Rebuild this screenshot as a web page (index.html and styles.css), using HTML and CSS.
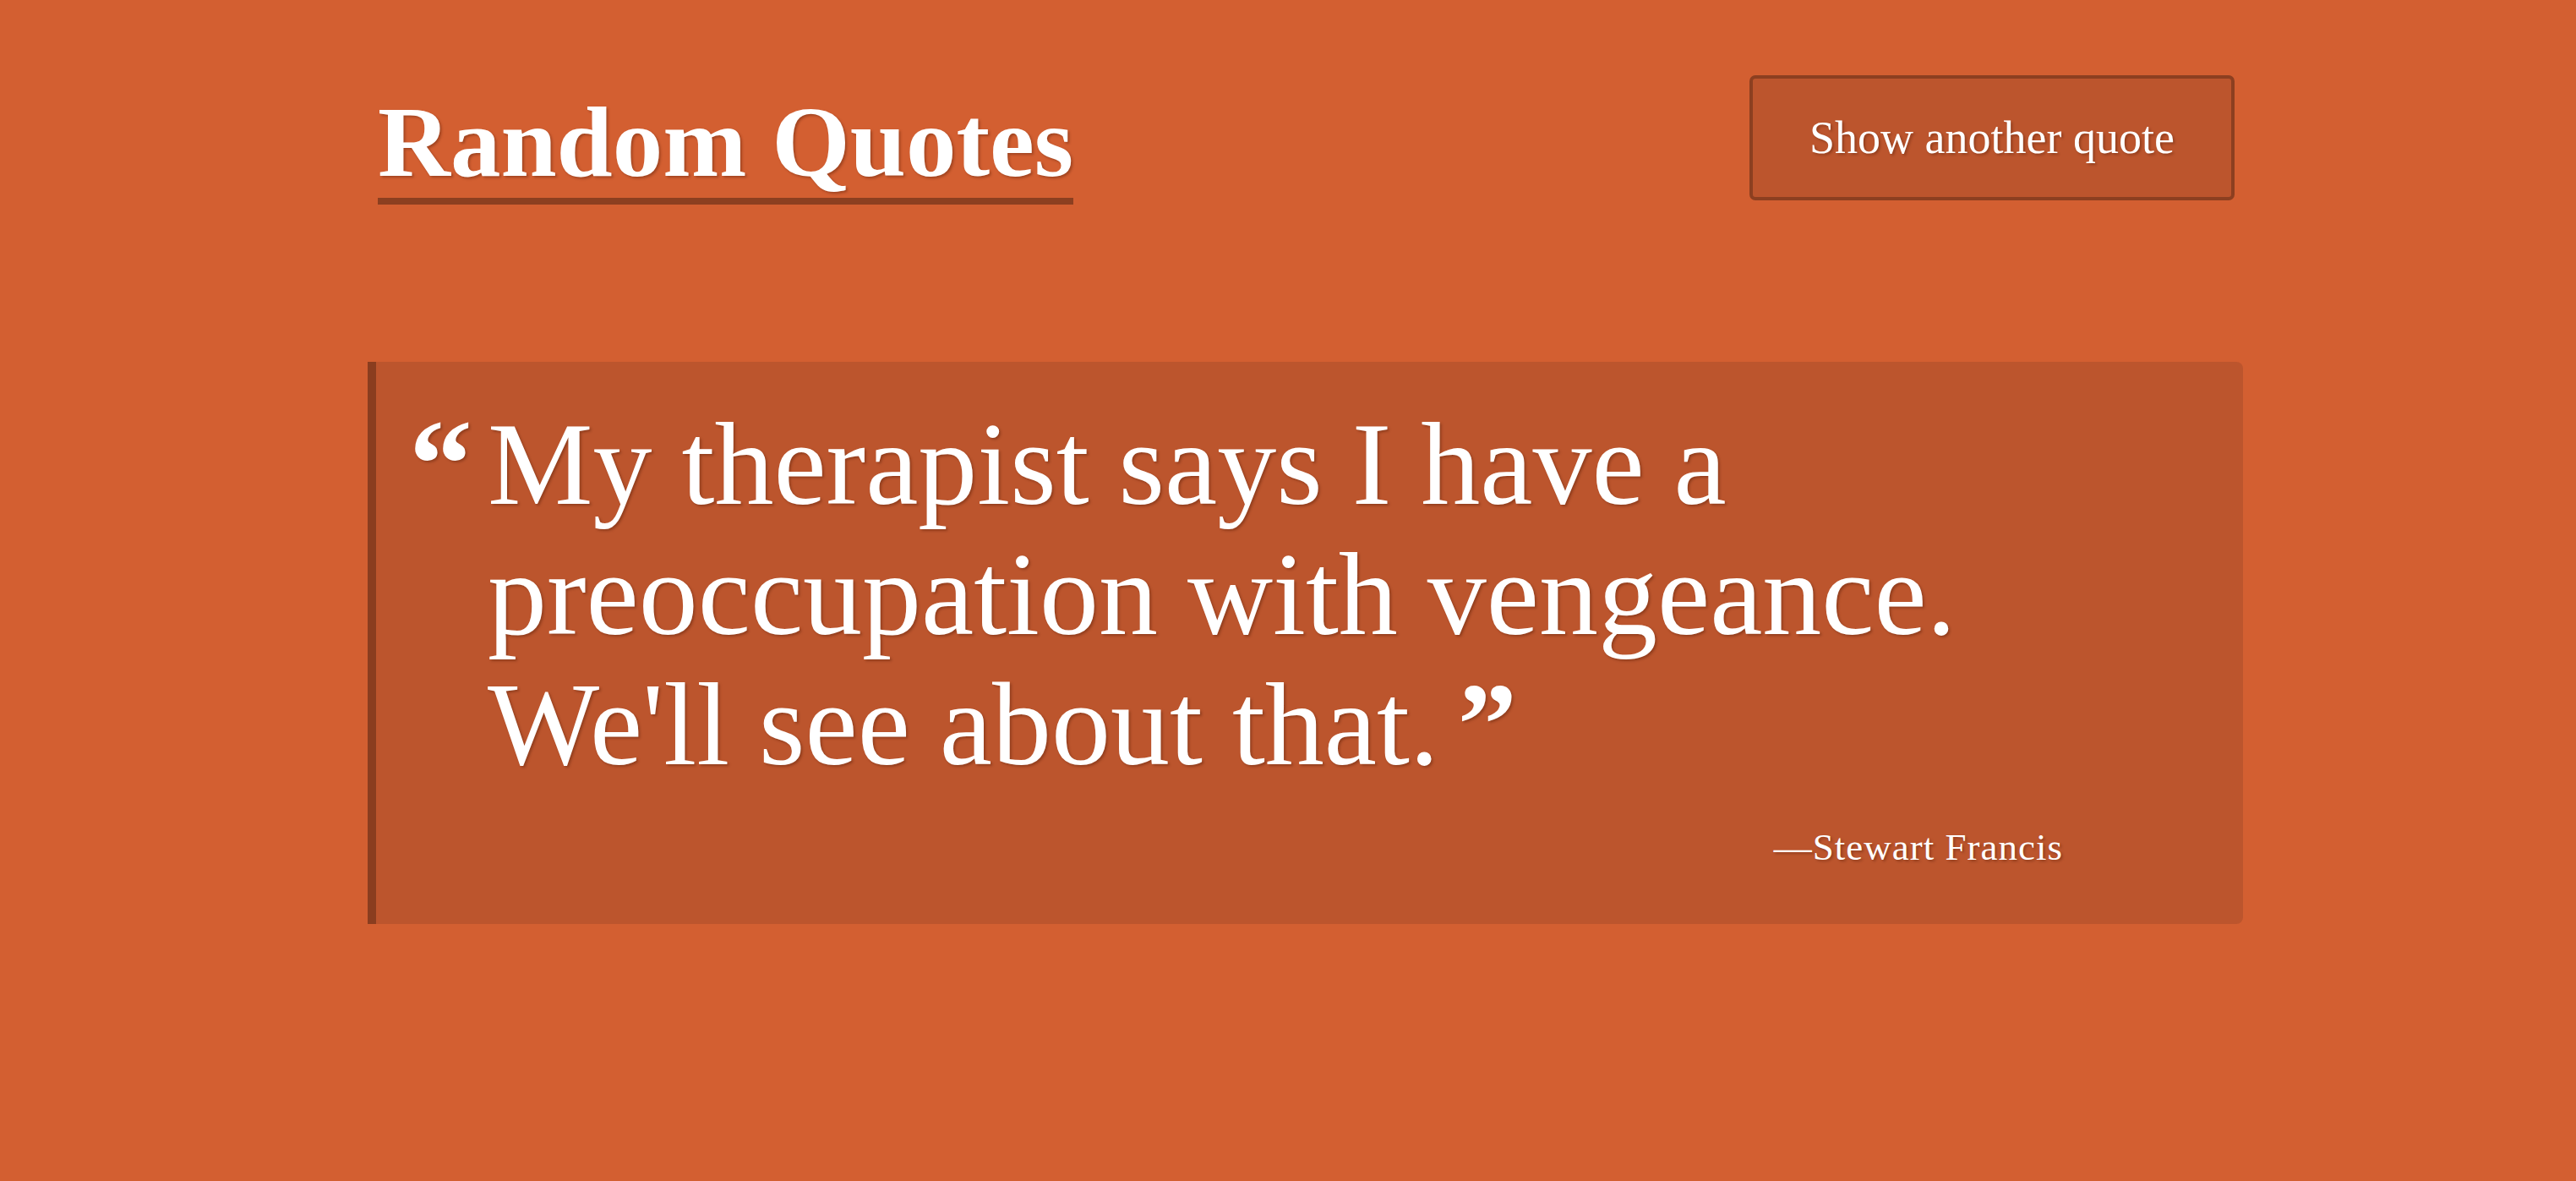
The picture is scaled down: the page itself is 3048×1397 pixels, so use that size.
FILE: index.html
```html
<!DOCTYPE html>
<html lang="en">
<head>
<meta charset="utf-8">
<title>Random Quotes</title>
<link rel="stylesheet" href="styles.css">
</head>
<body>
<div class="page">
  <header class="header">
    <h1 class="title">Random Quotes</h1>
    <button class="btn" type="button">Show another quote</button>
  </header>
  <blockquote class="quote">
    <span class="mark open">“</span>
    <div class="body">
      <p class="text">My therapist says I have a preoccupation with vengeance. We'll see about that.<span class="mark close">”</span></p>
      <p class="author">—Stewart Francis</p>
    </div>
  </blockquote>
</div>
</body>
</html>
```

FILE: styles.css
```css
html, body {
  margin: 0;
  padding: 0;
  background: #d35f31;
}
body {
  font-family: "Liberation Serif", "DejaVu Serif", serif;
  color: #ffffff;
  min-height: 1397px;
}
.page {
  width: 2219px;
  margin-left: 435px;
}
.header {
  display: flex;
  justify-content: space-between;
  align-items: flex-start;
  padding: 89px 10px 0 12px;
}
.title {
  margin: 20px 0 0 0;
  font-size: 119px;
  font-weight: bold;
  line-height: 118px;
  padding-bottom: 7px;
  border-bottom: 8px solid #8c3f20;
  text-shadow: 2px 2px 3px rgba(70, 20, 0, 0.35);
}
.btn {
  width: 574px;
  height: 148px;
  background: #bc552d;
  border: 4px solid #8c3f20;
  border-radius: 7px;
  color: #ffffff;
  font-family: "Liberation Serif", "DejaVu Serif", serif;
  font-size: 54px;
  padding: 0;
  text-shadow: 2px 2px 3px rgba(70, 20, 0, 0.35);
}
.quote {
  display: flex;
  align-items: flex-start;
  margin: 186px 0 0 0;
  height: 665px;
  box-sizing: border-box;
  background: #bc552d;
  border-left: 10px solid #8a3d1f;
  border-radius: 0 8px 8px 0;
  padding: 44px 213px 0 39px;
  text-shadow: 2px 2px 3px rgba(70, 20, 0, 0.35);
}
.mark {
  font-weight: bold;
  font-size: 150px;
  line-height: 154px;
}
.open {
  width: 93px;
  flex: none;
}
.close {
  margin-left: 22px;
  font-size: 140px;
}
.body {
  flex: 1;
}
.text {
  margin: 0;
  font-size: 140px;
  line-height: 154px;
}
.author {
  margin: 42px 0 0 0;
  text-align: right;
  font-size: 45px;
  letter-spacing: 1px;
}
```
